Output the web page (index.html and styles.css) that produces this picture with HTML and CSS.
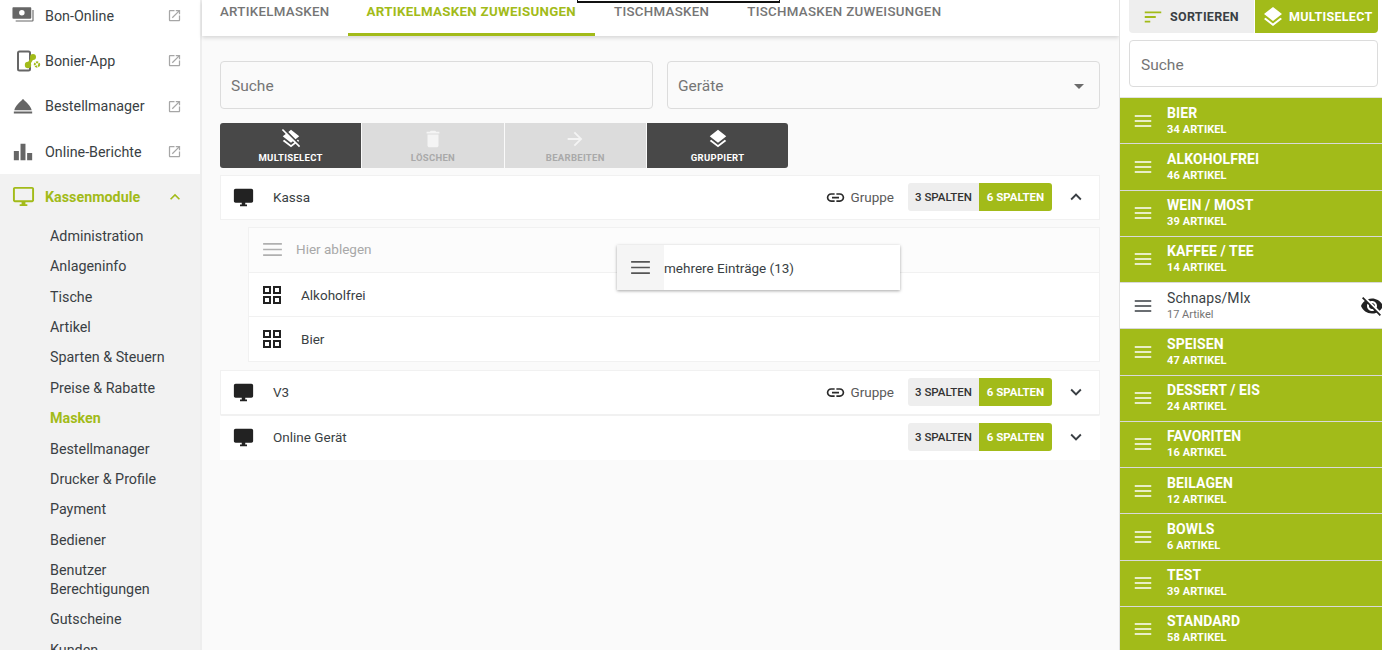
FILE: index.html
```html
<!DOCTYPE html>
<html lang="de">
<head>
<meta charset="utf-8">
<title>Artikelmasken Zuweisungen</title>
<link rel="stylesheet" href="styles.css">
</head>
<body>
<svg class="defs" width="0" height="0" aria-hidden="true">
  <symbol id="i-open" viewBox="0 0 24 24"><path d="M19 19H5V5h7V3H5c-1.11 0-2 .9-2 2v14c0 1.1.89 2 2 2h14c1.1 0 2-.9 2-2v-7h-2v7zM14 3v2h3.59l-9.83 9.83 1.41 1.41L19 6.41V10h2V3h-7z"/></symbol>
  <symbol id="i-monitor" viewBox="0 0 24 24"><path d="M21 2H3c-1.1 0-2 .9-2 2v12c0 1.1.9 2 2 2h7v2H8v2h8v-2h-2v-2h7c1.1 0 2-.9 2-2V4c0-1.1-.9-2-2-2z"/></symbol>
  <symbol id="i-monitor-o" viewBox="0 0 24 24"><path d="M21 2H3c-1.1 0-2 .9-2 2v12c0 1.1.9 2 2 2h7v2H8v2h8v-2h-2v-2h7c1.1 0 2-.9 2-2V4c0-1.1-.9-2-2-2zm0 14H3V4h18v12z"/></symbol>
  <symbol id="i-link" viewBox="0 0 24 24"><path d="M3.9 12c0-1.71 1.39-3.1 3.1-3.1h4V7H7c-2.76 0-5 2.24-5 5s2.24 5 5 5h4v-1.9H7c-1.71 0-3.1-1.39-3.1-3.1zM8 13h8v-2H8v2zm9-6h-4v1.9h4c1.71 0 3.1 1.39 3.1 3.1s-1.39 3.1-3.1 3.1h-4V17h4c2.76 0 5-2.24 5-5s-2.24-5-5-5z"/></symbol>
  <symbol id="i-layers" viewBox="0 0 24 24"><path d="M11.99 18.54l-7.37-5.73L3 14.07l9 7 9-7-1.63-1.27-7.38 5.74zM12 16l7.36-5.73L21 9l-9-7-9 7 1.63 1.27L12 16z"/></symbol>
  <symbol id="i-layers-clear" viewBox="0 0 24 24"><path d="M19.81 14.99l1.19-.92-1.43-1.43-1.19.92 1.43 1.43zm-.45-4.72L21 9l-9-7-2.91 2.27 7.87 7.88 2.4-1.88zM3.27 1L2 2.27l4.22 4.22L3 9l1.63 1.27L12 16l2.1-1.63 1.43 1.43L12 18.54l-7.37-5.73L3 14.07l9 7 4.95-3.85L20.73 21 22 19.73 3.27 1z"/></symbol>
  <symbol id="i-delete" viewBox="0 0 24 24"><path d="M6 19c0 1.1.9 2 2 2h8c1.1 0 2-.9 2-2V7H6v12zM19 4h-3.5l-1-1h-5l-1 1H5v2h14V4z"/></symbol>
  <symbol id="i-arrow" viewBox="0 0 24 24"><path d="M12 4l-1.41 1.41L16.17 11H4v2h12.17l-5.58 5.59L12 20l8-8z"/></symbol>
  <symbol id="i-less" viewBox="0 0 24 24"><path d="M12 8l-6 6 1.41 1.41L12 10.83l4.59 4.58L18 14z"/></symbol>
  <symbol id="i-more" viewBox="0 0 24 24"><path d="M16.59 8.59L12 13.17 7.41 8.59 6 10l6 6 6-6z"/></symbol>
  <symbol id="i-menu" viewBox="0 0 24 24"><path d="M3 16.6h18v1.6H3zM3 11.2h18v1.6H3zM3 5.8h18v1.6H3z"/></symbol>
  <symbol id="i-grid" viewBox="0 0 24 24"><path d="M3 3v8h8V3H3zm6 6H5V5h4v4zm-6 4v8h8v-8H3zm6 6H5v-4h4v4zm4-16v8h8V3h-8zm6 6h-4V5h4v4zm-6 4v8h8v-8h-8zm6 6h-4v-4h4v4z"/></symbol>
  <symbol id="i-sort" viewBox="0 0 24 24"><path d="M3 18h6v-2H3v2zM3 6v2h18V6H3zm0 7h12v-2H3v2z"/></symbol>
  <symbol id="i-eye-off" viewBox="0 0 24 24"><path d="M12 7c2.76 0 5 2.24 5 5 0 .65-.13 1.26-.36 1.83l2.92 2.92c1.51-1.26 2.7-2.89 3.43-4.75-1.73-4.39-6-7.5-11-7.5-1.4 0-2.74.25-3.98.7l2.16 2.16C10.74 7.13 11.35 7 12 7zM2 4.27l2.28 2.28.46.46C3.08 8.3 1.78 10.02 1 12c1.73 4.39 6 7.5 11 7.5 1.55 0 3.03-.3 4.38-.84l.42.42L19.73 22 21 20.73 3.27 3 2 4.27zM7.53 9.8l1.55 1.55c-.05.21-.08.43-.08.65 0 1.66 1.34 3 3 3 .22 0 .44-.03.65-.08l1.55 1.55c-.67.33-1.41.53-2.2.53-2.76 0-5-2.24-5-5 0-.79.2-1.53.53-2.2zm4.31-.78l3.15 3.15.02-.16c0-1.66-1.34-3-3-3l-.17.01z"/></symbol>
  <symbol id="i-service" viewBox="0 0 24 24"><path d="M2 18h20v2.200H2zM12 4.500c-.8 0-1.300.7-1.500 1.500C9 7.500 4 11 2.500 16.500h19C20 11 15 7.500 13.500 6c-.2-.8-.7-1.500-1.500-1.500z"/></symbol>
  <symbol id="i-bars" viewBox="0 0 24 24"><path d="M2 11h5.500v10H2zM9.300 3h5.400v18H9.300zM16.500 13H22v8h-5.500z"/></symbol>
  <symbol id="i-cash" viewBox="0 0 24 24"><path d="M1.500 2.500h18.500c.5 0 1 .5 1 1V14c0 .5-.5 1-1 1H1.500c-.5 0-1-.5-1-1V3.500c0-.5.5-1 1-1zm9.250 3a3 3 0 1 0 0 6 3 3 0 0 0 0-6zM22.300 5.500h1.200V17c0 .5-.5 1-1 1H4v-1.200h18.300z"/></symbol>
</svg>

<aside class="sidebar">
  <nav class="nav-top">
    <a class="nav-link"><svg class="nav-icon"><use href="#i-cash"/></svg><span class="nav-text">Bon-Online</span><svg class="nav-ext"><use href="#i-open"/></svg></a>
    <a class="nav-link">
      <svg class="app-icon" viewBox="0 0 28 24">
        <rect class="app-phone" x="5" y="2.500" width="12" height="19" rx="1.500"/>
        <path class="app-line" d="M20 8 15 16"/>
        <circle class="app-green" cx="20" cy="8" r="3"/>
        <circle class="app-green" cx="15" cy="16" r="3.200"/>
        <circle class="app-gear" cx="24" cy="15.500" r="2.200"/>
      </svg>
      <span class="nav-text">Bonier-App</span><svg class="nav-ext"><use href="#i-open"/></svg></a>
    <a class="nav-link"><svg class="nav-icon"><use href="#i-service"/></svg><span class="nav-text">Bestellmanager</span><svg class="nav-ext"><use href="#i-open"/></svg></a>
    <a class="nav-link"><svg class="nav-icon"><use href="#i-bars"/></svg><span class="nav-text">Online-Berichte</span><svg class="nav-ext"><use href="#i-open"/></svg></a>
  </nav>
  <div class="nav-group">
    <a class="nav-link nav-link-active"><svg class="nav-icon"><use href="#i-monitor-o"/></svg><span class="nav-text">Kassenmodule</span><svg class="nav-chev"><use href="#i-less"/></svg></a>
    <ul class="sub-nav">
      <li>Administration</li>
      <li>Anlageninfo</li>
      <li>Tische</li>
      <li>Artikel</li>
      <li>Sparten &amp; Steuern</li>
      <li>Preise &amp; Rabatte</li>
      <li class="sub-active">Masken</li>
      <li>Bestellmanager</li>
      <li>Drucker &amp; Profile</li>
      <li>Payment</li>
      <li>Bediener</li>
      <li class="sub-two">Benutzer Berechtigungen</li>
      <li>Gutscheine</li>
      <li>Kunden</li>
    </ul>
  </div>
</aside>

<main class="main">
  <div class="tabs">
    <a class="tab tab-first">ARTIKELMASKEN</a>
    <a class="tab tab-active">ARTIKELMASKEN ZUWEISUNGEN</a>
    <a class="tab">TISCHMASKEN</a>
    <a class="tab">TISCHMASKEN ZUWEISUNGEN</a>
  </div>
  <div class="content">
    <div class="filters">
      <div class="field">Suche</div>
      <div class="field field-select">Geräte<span class="caret"></span></div>
    </div>
    <div class="toolbar">
      <button class="tool"><svg><use href="#i-layers-clear"/></svg>MULTISELECT</button>
      <button class="tool tool-off"><svg><use href="#i-delete"/></svg>LÖSCHEN</button>
      <button class="tool tool-off"><svg><use href="#i-arrow"/></svg>BEARBEITEN</button>
      <button class="tool"><svg><use href="#i-layers"/></svg>GRUPPIERT</button>
    </div>

    <section class="device device-open">
      <svg class="dev-icon"><use href="#i-monitor"/></svg>
      <span class="dev-name">Kassa</span>
      <span class="group-link"><svg><use href="#i-link"/></svg>Gruppe</span>
      <span class="seg"><span class="seg-a">3 SPALTEN</span><span class="seg-b">6 SPALTEN</span></span>
      <svg class="dev-chev"><use href="#i-less"/></svg>
    </section>
    <div class="assign">
      <div class="assign-row assign-drop"><svg class="drop-icon"><use href="#i-menu"/></svg>Hier ablegen</div>
      <div class="assign-row"><svg class="grid-icon"><use href="#i-grid"/></svg>Alkoholfrei</div>
      <div class="assign-row"><svg class="grid-icon"><use href="#i-grid"/></svg>Bier</div>
    </div>
    <section class="device device-first">
      <svg class="dev-icon"><use href="#i-monitor"/></svg>
      <span class="dev-name">V3</span>
      <span class="group-link"><svg><use href="#i-link"/></svg>Gruppe</span>
      <span class="seg"><span class="seg-a">3 SPALTEN</span><span class="seg-b">6 SPALTEN</span></span>
      <svg class="dev-chev"><use href="#i-more"/></svg>
    </section>
    <section class="device device-last">
      <svg class="dev-icon"><use href="#i-monitor"/></svg>
      <span class="dev-name">Online Gerät</span>
      <span class="seg"><span class="seg-a">3 SPALTEN</span><span class="seg-b">6 SPALTEN</span></span>
      <svg class="dev-chev"><use href="#i-more"/></svg>
    </section>
  </div>
</main>

<aside class="panel">
  <div class="panel-actions">
    <button class="pa pa-sort"><svg><use href="#i-sort"/></svg>SORTIEREN</button>
    <button class="pa pa-multi"><svg><use href="#i-layers"/></svg>MULTISELECT</button>
  </div>
  <div class="panel-search"><div class="panel-field">Suche</div></div>
  <ul class="cats">
    <li class="cat"><svg><use href="#i-menu"/></svg><div class="cat-t"><b>BIER</b><small>34 ARTIKEL</small></div></li>
    <li class="cat"><svg><use href="#i-menu"/></svg><div class="cat-t"><b>ALKOHOLFREI</b><small>46 ARTIKEL</small></div></li>
    <li class="cat"><svg><use href="#i-menu"/></svg><div class="cat-t"><b>WEIN / MOST</b><small>39 ARTIKEL</small></div></li>
    <li class="cat"><svg><use href="#i-menu"/></svg><div class="cat-t"><b>KAFFEE / TEE</b><small>14 ARTIKEL</small></div></li>
    <li class="cat cat-hidden"><svg><use href="#i-menu"/></svg><div class="cat-t"><b>Schnaps/MIx</b><small>17 Artikel</small></div><svg class="eye"><use href="#i-eye-off"/></svg></li>
    <li class="cat"><svg><use href="#i-menu"/></svg><div class="cat-t"><b>SPEISEN</b><small>47 ARTIKEL</small></div></li>
    <li class="cat"><svg><use href="#i-menu"/></svg><div class="cat-t"><b>DESSERT / EIS</b><small>24 ARTIKEL</small></div></li>
    <li class="cat"><svg><use href="#i-menu"/></svg><div class="cat-t"><b>FAVORITEN</b><small>16 ARTIKEL</small></div></li>
    <li class="cat"><svg><use href="#i-menu"/></svg><div class="cat-t"><b>BEILAGEN</b><small>12 ARTIKEL</small></div></li>
    <li class="cat"><svg><use href="#i-menu"/></svg><div class="cat-t"><b>BOWLS</b><small>6 ARTIKEL</small></div></li>
    <li class="cat"><svg><use href="#i-menu"/></svg><div class="cat-t"><b>TEST</b><small>39 ARTIKEL</small></div></li>
    <li class="cat"><svg><use href="#i-menu"/></svg><div class="cat-t"><b>STANDARD</b><small>58 ARTIKEL</small></div></li>
  </ul>
</aside>

<div class="top-sliver"></div>
<div class="drag-ghost">
  <span class="ghost-handle"><svg><use href="#i-menu"/></svg></span>
  <span>mehrere Einträge (13)</span>
</div>
</body>
</html>
```

FILE: styles.css
```css
* { box-sizing: border-box; }
html, body { margin: 0; padding: 0; }
body {
  width: 1382px;
  height: 650px;
  overflow: hidden;
  display: flex;
  position: relative;
  font-family: Roboto, "Liberation Sans", sans-serif;
  font-size: 13.500px;
  color: #3a3f44;
  background: #fafafa;
}
.defs { position: absolute; }
ul { list-style: none; margin: 0; padding: 0; }
button { font-family: inherit; border: 0; padding: 0; margin: 0; }
svg { fill: currentColor; display: block; flex: none; }

/* Sidebar */
.sidebar {
  width: 202px;
  height: 650px;
  flex: none;
  background: #fff;
  border-right: 2px solid #eeeeee;
  overflow: hidden;
}
.nav-top { margin-top: -7px; }
.nav-link {
  display: flex;
  align-items: center;
  height: 45.300px;
  padding-left: 12px;
  color: #3a3f44;
  font-size: 14.300px;
}
.nav-icon { width: 22px; height: 22px; color: #666; margin-right: 11px; }
.nav-text { flex: 1; }
.nav-ext { width: 15px; height: 15px; color: #a6a6a6; margin-right: 18px; }
.app-icon { margin-left: 1px; margin-right: 4px; width: 28px; height: 24px; }
.app-phone { fill: #fff; stroke: #666; stroke-width: 2; }
.app-line { fill: none; stroke: #a2bb19; stroke-width: 3; }
.app-green { fill: #a2bb19; }
.app-gear { fill: #fff; stroke: #a2bb19; stroke-width: 2; stroke-dasharray: 2 .8; }
.nav-group { background: #f2f2f2; padding-bottom: 40px; }
.nav-link-active { color: #a2bb19; font-weight: 700; }
.nav-link-active .nav-icon { color: #a2bb19; width: 23px; height: 23px; margin-right: 10px; }
.nav-chev { width: 20px; height: 20px; color: #a2bb19; margin-right: 15px; }
.sub-nav { padding: 1.600px 30px 0 50px; font-size: 14.300px; }
.sub-nav li { display: flex; align-items: center; min-height: 30.400px; line-height: 19px; color: #3a3f44; }
.sub-nav .sub-two { padding: 5.700px 0; }
.sub-nav .sub-active { color: #a2bb19; font-weight: 700; }

/* Main */
.main { width: 917px; flex: none; min-width: 0; }
.tabs {
  display: flex;
  height: 36px;
  background: #fff;
  box-shadow: 0 2px 4px rgba(0,0,0,.14);
}
.tab {
  height: 36px;
  padding: 4px 19px 0;
  line-height: 15px;
  font-size: 13.300px;
  font-weight: 500;
  letter-spacing: .3px;
  color: #757575;
}
.tab-first { padding-left: 18px; padding-right: 18px; }
.tab-active { color: #a2bb19; font-weight: 700; border-bottom: 3px solid #a2bb19; }
.content { padding: 25px 19px 0 18px; }
.filters { display: flex; gap: 14px; }
.field {
  width: 433px;
  height: 48px;
  display: flex;
  align-items: center;
  justify-content: space-between;
  padding: 2px 10px 0;
  border: 1px solid #dcdcdc;
  border-radius: 4px;
  font-size: 15.500px;
  color: #757575;
}
.field-select { padding-right: 15px; }
.caret { width: 0; height: 0; border-left: 5px solid transparent; border-right: 5px solid transparent; border-top: 5px solid #6b6b6b; }
.toolbar { display: flex; gap: 1px; margin-top: 14px; margin-bottom: 7px; }
.tool {
  width: 141.300px;
  height: 45px;
  display: flex;
  flex-direction: column;
  align-items: center;
  padding-top: 5px;
  background: #484848;
  color: #fff;
  font-size: 9.500px;
  font-weight: 700;
  letter-spacing: .3px;
}
.tool svg { width: 22px; height: 22px; margin-bottom: 2px; }
.tool:first-child { border-radius: 3px 0 0 3px; }
.tool:last-child { border-radius: 0 3px 3px 0; }
.tool-off { background: #dcdcdc; color: #a9a9a9; }
.tool-off svg { color: #f4f4f4; }

.device {
  display: flex;
  align-items: center;
  height: 45px;
  width: 880px;
  background: #fff;
  border: 1px solid #f1f1f1;
  padding: 0 0 1px 12px;
}
.device-last { border-color: #f1f1f1 transparent transparent; }
.device-first { margin-top: 8px; }
.dev-icon { width: 21px; height: 21px; color: #222; margin-right: 19px; }
.dev-name { flex: 1; color: #3a3f44; }
.group-link { display: flex; align-items: center; color: #5a5a5a; margin-right: 14px; }
.group-link svg { width: 21px; height: 21px; color: #2b2b2b; margin-right: 4px; }
.seg { display: flex; height: 28px; font-size: 11.500px; font-weight: 500; border-radius: 3px; overflow: hidden; }
.seg span { display: flex; align-items: center; justify-content: center; }
.seg-a { width: 71px; background: #eeeeee; color: #333; }
.seg-b { width: 73px; background: #a2bb19; color: #fff; font-weight: 700; }
.dev-chev { width: 22px; height: 22px; color: #3a3f44; margin: 0 12px 0 13px; }

.assign { margin: 7px 0 0 28px; width: 852px; border: 1px solid #f1f1f1; border-top: 0; }
.assign-row {
  display: flex;
  align-items: center;
  height: 44.700px;
  background: #fff;
  border-top: 1px solid #f1f1f1;
  padding-left: 11px;
  color: #3a3f44;
}
.assign-drop { background: #fcfcfc; color: #a8a8a8; padding-bottom: 1px; }
.drop-icon { width: 25px; height: 25px; color: #b0b0b0; margin-right: 11px; }
.grid-icon { width: 24px; height: 24px; color: #222; margin-right: 17px; }

/* Right panel */
.panel {
  width: 263px;
  flex: none;
  background: #fff;
  border-left: 1px solid #e3e3e3;
  overflow: hidden;
}
.panel-actions { display: flex; gap: 1px; padding-left: 9px; width: 258px; }
.pa {
  display: flex;
  align-items: center;
  height: 33px;
  font-size: 12.500px;
  font-weight: 700;
  letter-spacing: .3px;
  white-space: nowrap;
}
.pa-sort { width: 125px; background: #eeeeee; color: #3a3f44; padding-left: 13px; border-radius: 0 0 0 4px; }
.pa-sort svg { width: 22px; height: 22px; color: #a2bb19; margin-right: 6px; }
.pa-multi { width: 123px; background: #a2bb19; color: #fff; padding-left: 6px; border-radius: 0 0 4px 0; }
.pa-multi svg { width: 24px; height: 24px; margin-right: 4px; }
.panel-search { padding: 7px 4px 10px 9px; border-bottom: 1px solid #e3e3e3; }
.panel-field {
  height: 47px;
  display: flex;
  align-items: center;
  padding: 2px 11px 0;
  border: 1px solid #dcdcdc;
  border-radius: 4px;
  font-size: 15.500px;
  color: #757575;
}
.cat {
  display: flex;
  align-items: center;
  height: 46.250px;
  background: #a2bb19;
  color: #fff;
  border-bottom: 1px solid #d9d9d9;
  padding-left: 12px;
  position: relative;
}
.cat > svg:first-child { width: 22px; height: 22px; margin-right: 13px; }
.cat-t { display: flex; flex-direction: column; }
.cat-t b { font-size: 14px; font-weight: 700; line-height: 17px; letter-spacing: .1px; }
.cat-t small { font-size: 11px; font-weight: 700; line-height: 15px; letter-spacing: .1px; }
.cat-hidden { background: #fff; color: #3a3f44; }
.cat-hidden .cat-t b { font-weight: 400; }
.cat-hidden .cat-t small { font-weight: 400; color: #757575; letter-spacing: 0; }
.eye { position: absolute; right: -2px; top: 11px; width: 24px; height: 24px; color: #222; }

/* Overlays */
.top-sliver {
  position: absolute;
  left: 577px;
  top: 0;
  width: 203px;
  height: 3px;
  background: #fff;
  border: 1px solid #111;
  border-top: 0;
  border-bottom-width: 2px;
}
.drag-ghost {
  position: absolute;
  left: 617px;
  top: 245px;
  width: 283px;
  height: 45px;
  display: flex;
  align-items: center;
  background: #fff;
  color: #3a3f44;
  box-shadow: 0 1px 3px rgba(0,0,0,.35);
}
.ghost-handle { width: 47px; height: 45px; background: #f5f5f5; display: flex; align-items: center; justify-content: center; color: #555; }
.ghost-handle svg { width: 25px; height: 25px; }
```
